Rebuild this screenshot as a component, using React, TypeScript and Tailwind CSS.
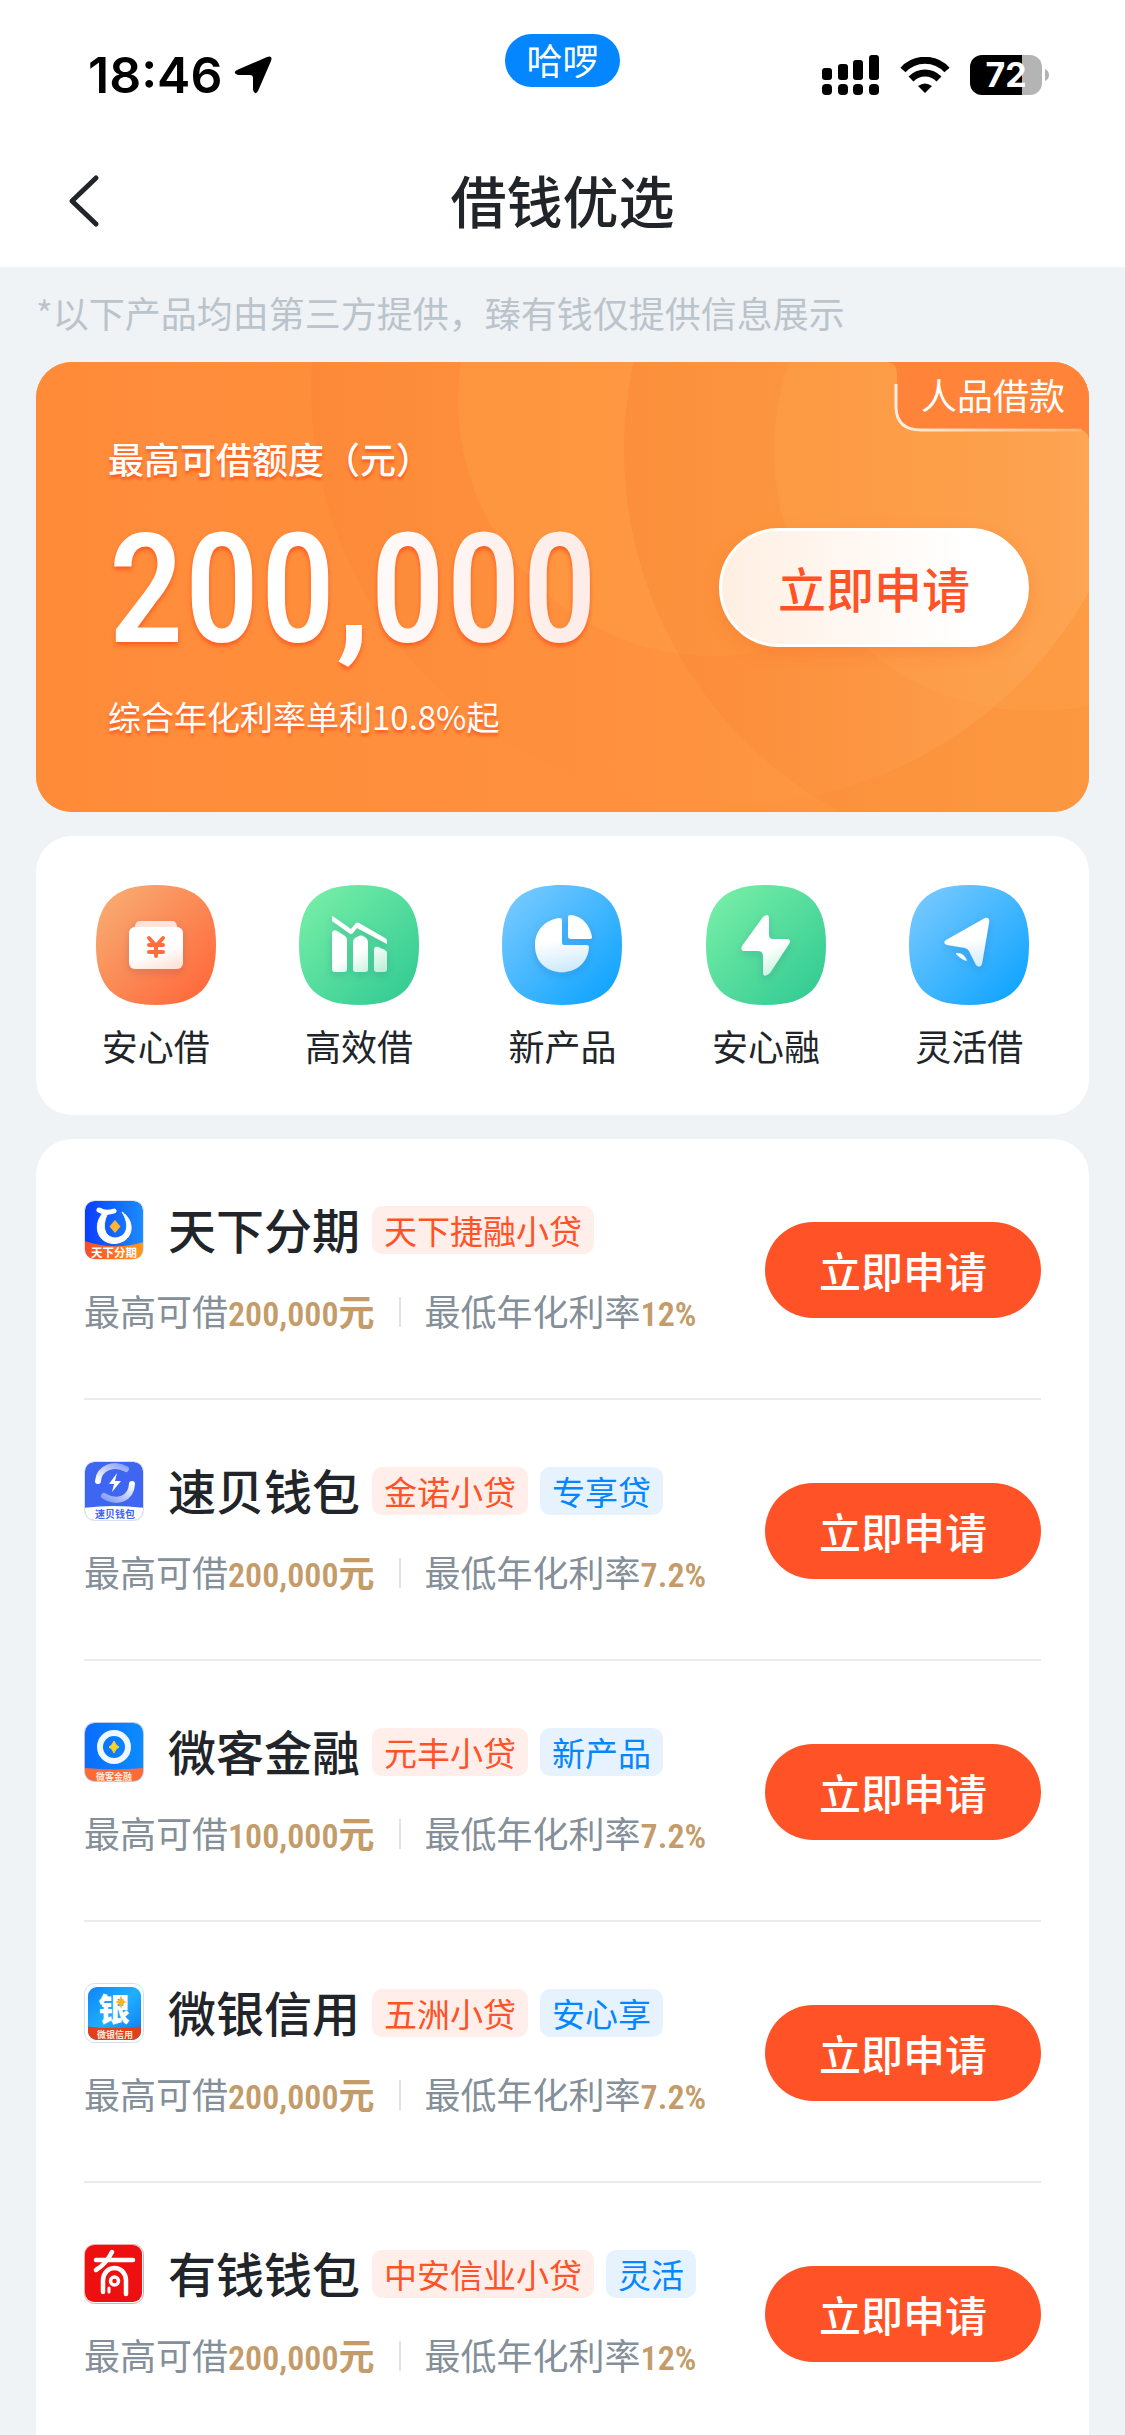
import React from 'react';

type Product = {
  name: string;
  lender: string;
  badge?: string;
  amount: string;
  rate: string;
  logo: React.ReactNode;
};

const LOGO_FONT = '"Noto Sans CJK SC", sans-serif';

/* ---------- Product logos ---------- */

const TianxiaLogo = () => (
  <svg viewBox="0 0 60 60" className="size-15" aria-hidden="true">
    <defs>
      <linearGradient id="txBlue" x1="0" y1="0" x2="1" y2="0">
        <stop offset="0" stopColor="#0a3cff" />
        <stop offset="1" stopColor="#1c8dff" />
      </linearGradient>
      <linearGradient id="txOrange" x1="0" y1="0" x2="1" y2="0">
        <stop offset="0" stopColor="#ff4a24" />
        <stop offset="1" stopColor="#ff9a1f" />
      </linearGradient>
      <clipPath id="txClip">
        <rect x="1" y="1" width="58" height="58" rx="9" />
      </clipPath>
    </defs>
    <g clipPath="url(#txClip)">
      <rect width="60" height="60" fill="url(#txBlue)" />
      <path d="M0 41Q30 51 60 42V60H0Z" fill="url(#txOrange)" />
    </g>
    <path d="M15 10Q22 14 30 11" fill="none" stroke="#fff" strokeWidth="5" strokeLinecap="round" />
    <path d="M19 13C9 24 12 43 30 43.500C49 43 53 22 38 12C46 24 44 37 31 38C19 37 18 24 24 13Z" fill="#fff" stroke="#fff" strokeWidth="1" />
    <path d="M31 20L36.500 26.500L31 33L25.500 26.500Z" fill="#ffb52e" />
    <text x="30" y="57" textAnchor="middle" fontSize="11.500" fontWeight="700" fill="#fff" fontFamily={LOGO_FONT}>天下分期</text>
    <rect x="0.500" y="0.500" width="59" height="59" rx="10" fill="none" stroke="#dfe5ee" />
  </svg>
);

const SubeiLogo = () => (
  <svg viewBox="0 0 60 60" className="size-15" aria-hidden="true">
    <defs>
      <clipPath id="sbClip">
        <rect x="1" y="1" width="58" height="58" rx="9" />
      </clipPath>
      <linearGradient id="sbArc" x1="0" y1="1" x2="1" y2="0">
        <stop offset="0" stopColor="#fff" />
        <stop offset="1" stopColor="#fff" stopOpacity="0.400" />
      </linearGradient>
      <linearGradient id="sbArc2" x1="1" y1="0" x2="0" y2="1">
        <stop offset="0" stopColor="#fff" />
        <stop offset="1" stopColor="#fff" stopOpacity="0.350" />
      </linearGradient>
    </defs>
    <g clipPath="url(#sbClip)">
      <rect width="60" height="60" fill="#3f66f0" />
      <path d="M0 47Q30 43 60 47V60H0Z" fill="#fff" />
    </g>
    <path d="M14 20C15 7 30 1 42 8" fill="none" stroke="url(#sbArc)" strokeWidth="6" strokeLinecap="round" />
    <path d="M48 23C47 38 33 43 20 35" fill="none" stroke="url(#sbArc2)" strokeWidth="6" strokeLinecap="round" />
    <path d="M33 12L25 23H30L28 31L37 20H31Z" fill="#fff" />
    <text x="31" y="57" textAnchor="middle" fontSize="10" fontWeight="700" fill="#3f66f0" fontFamily={LOGO_FONT}>速贝钱包</text>
    <rect x="0.500" y="0.500" width="59" height="59" rx="10" fill="none" stroke="#d9dfec" />
  </svg>
);

const WeikeLogo = () => (
  <svg viewBox="0 0 60 60" className="size-15" aria-hidden="true">
    <defs>
      <linearGradient id="wkBlue" x1="0" y1="0" x2="1" y2="0">
        <stop offset="0" stopColor="#0a6bff" />
        <stop offset="1" stopColor="#0b8dff" />
      </linearGradient>
      <clipPath id="wkClip">
        <rect x="1" y="1" width="58" height="58" rx="9" />
      </clipPath>
    </defs>
    <g clipPath="url(#wkClip)">
      <rect width="60" height="60" fill="url(#wkBlue)" />
      <path d="M0 46Q30 49 60 46V60H0Z" fill="#ff6a35" />
    </g>
    <circle cx="30" cy="25" r="14" fill="none" stroke="#eef6ff" strokeWidth="6" />
    <path d="M30 19Q31.500 23.500 35 25Q31.500 26.500 30 31Q28.500 26.500 25 25Q28.500 23.500 30 19Z" fill="#ffd321" stroke="#ffd321" />
    <text x="30" y="58" textAnchor="middle" fontSize="9" fontWeight="700" fill="#ffe9df" fontFamily={LOGO_FONT}>微客金融</text>
    <rect x="0.500" y="0.500" width="59" height="59" rx="10" fill="none" stroke="#bcc8e6" />
  </svg>
);

const WeiyinLogo = () => (
  <svg viewBox="0 0 60 60" className="size-15" aria-hidden="true">
    <defs>
      <linearGradient id="wyBlue" x1="0" y1="0" x2="1" y2="1">
        <stop offset="0" stopColor="#0c7cf5" />
        <stop offset="0.500" stopColor="#1fb0ff" />
        <stop offset="1" stopColor="#0a6ff0" />
      </linearGradient>
      <clipPath id="wyClip">
        <rect x="4" y="4" width="53" height="53" rx="9" />
      </clipPath>
    </defs>
    <rect x="0.500" y="0.500" width="59" height="59" rx="10" fill="#fff" stroke="#d5e0ee" />
    <g clipPath="url(#wyClip)">
      <rect width="60" height="60" fill="url(#wyBlue)" />
      <path d="M0 43Q30 47 60 43V60H0Z" fill="#e0401c" />
    </g>
    <text x="30" y="38" textAnchor="middle" fontSize="32" fontWeight="900" fill="#fff" fontFamily={LOGO_FONT}>银</text>
    <path d="M37 12Q38 18 43 19Q38 20 37 26Q36 20 31 19Q36 18 37 12Z" fill="#ffb320" />
    <text x="31" y="55" textAnchor="middle" fontSize="9" fontWeight="700" fill="#ffe9df" fontFamily={LOGO_FONT}>微银信用</text>
  </svg>
);

const YouqianLogo = () => (
  <svg viewBox="0 0 60 60" className="size-15" aria-hidden="true">
    <rect x="0.500" y="0.500" width="59" height="59" rx="10" fill="#fff" stroke="#e9a9a9" />
    <rect x="1" y="1" width="57" height="57" rx="9" fill="#ee1010" />
    <g fill="none" stroke="#fff" strokeWidth="4.500" strokeLinecap="round" strokeLinejoin="round">
      <path d="M12 16H49" />
      <path d="M28 8Q22 20 12 26" />
      <path d="M19 48V36C20 20 41 20 42 36V50" />
      <circle cx="30.500" cy="37" r="4" strokeWidth="3.500" />
      <path d="M25 44V48" strokeWidth="3" />
    </g>
  </svg>
);

const products: Product[] = [
  { name: '天下分期', lender: '天下捷融小贷', amount: '200,000', rate: '12%', logo: <TianxiaLogo /> },
  { name: '速贝钱包', lender: '金诺小贷', badge: '专享贷', amount: '200,000', rate: '7.2%', logo: <SubeiLogo /> },
  { name: '微客金融', lender: '元丰小贷', badge: '新产品', amount: '100,000', rate: '7.2%', logo: <WeikeLogo /> },
  { name: '微银信用', lender: '五洲小贷', badge: '安心享', amount: '200,000', rate: '7.2%', logo: <WeiyinLogo /> },
  { name: '有钱钱包', lender: '中安信业小贷', badge: '灵活', amount: '200,000', rate: '12%', logo: <YouqianLogo /> },
];

/* ---------- Category icons ---------- */

const SQUIRCLE = 'M60 0C103 0 120 19 120 60S103 120 60 120S0 101 0 60S17 0 60 0Z';

const IconDefs = () => (
  <svg className="absolute size-0" aria-hidden="true">
    <defs>
      <linearGradient id="orangeTile" x1="0" y1="0" x2="1" y2="1">
        <stop offset="0.100" stopColor="#f8a970" />
        <stop offset="0.900" stopColor="#ff6a3c" />
      </linearGradient>
      <linearGradient id="greenTile" x1="0" y1="0" x2="1" y2="1">
        <stop offset="0.100" stopColor="#74eda6" />
        <stop offset="0.900" stopColor="#35cc94" />
      </linearGradient>
      <linearGradient id="blueTile" x1="0" y1="0" x2="1" y2="1">
        <stop offset="0.100" stopColor="#74c8ff" />
        <stop offset="0.900" stopColor="#12a5ff" />
      </linearGradient>
      <linearGradient id="whiteOrange" x1="0.300" y1="0" x2="0.700" y2="1">
        <stop offset="0.600" stopColor="#fff" />
        <stop offset="1" stopColor="#ffe3d8" />
      </linearGradient>
      <linearGradient id="whiteGreen" gradientUnits="userSpaceOnUse" x1="50" y1="50" x2="72" y2="92">
        <stop offset="0.400" stopColor="#fff" />
        <stop offset="1" stopColor="#bdf0d8" />
      </linearGradient>
      <linearGradient id="whiteBlue" gradientUnits="userSpaceOnUse" x1="56" y1="40" x2="64" y2="88">
        <stop offset="0.300" stopColor="#fff" />
        <stop offset="1" stopColor="#cbe8fb" />
      </linearGradient>
      <filter id="glyphShadow" x="-30%" y="-30%" width="160%" height="160%">
        <feDropShadow dx="0" dy="3" stdDeviation="4" floodColor="#00306a" floodOpacity="0.140" />
      </filter>
    </defs>
  </svg>
);

const categories = [
  {
    label: '安心借',
    tile: 'url(#orangeTile)',
    glyph: (
      <>
        <path d="M38 44L40 38Q41 36 44 36H76Q79 36 80 38L82 44Z" fill="#ffe3da" />
        <rect x="33" y="42" width="54" height="42" rx="6" fill="url(#whiteOrange)" />
        <path d="M53 53L60 61L67 53M53 60H67M53 67H67M60 61V71" fill="none" stroke="#ff6c3f" strokeWidth="4" strokeLinecap="round" />
      </>
    ),
  },
  {
    label: '高效借',
    tile: 'url(#greenTile)',
    glyph: (
      <g fill="url(#whiteGreen)">
        <path d="M33 31L35 32L52 44L57 38Q58 37 60 38L86 53Q88 54 88 56V59L58 43L54 48Q52 50 50 48L33 36Z" fill="#fff" />
        <path d="M33 47Q35 44 38 46L46 51Q48 53 48 55V84Q48 87 45 87H36Q33 87 33 84Z" />
        <path d="M54 57Q54 55 56 53L60 51Q62 50 64 51L67 53Q69 55 69 57V84Q69 87 66 87H57Q54 87 54 84Z" />
        <path d="M75 64Q76 61 79 62L86 65Q88 66 88 68V84Q88 87 85 87H78Q75 87 75 84Z" />
      </g>
    ),
  },
  {
    label: '新产品',
    tile: 'url(#blueTile)',
    glyph: (
      <>
        <path d="M58 33Q60 33 60 35V58Q60 60 62 60H84Q87 60 87 62C85 96 33 96 33 60C33 44 45 34 58 33Z" fill="url(#whiteBlue)" />
        <path d="M66 32Q66 30 69 30C80 31 88 40 90 52Q90 54 88 54H69Q66 54 66 51Z" fill="#fff" />
      </>
    ),
  },
  {
    label: '安心融',
    tile: 'url(#greenTile)',
    glyph: (
      <path d="M57 32Q63 27 63 34V50Q63 54 67 54H80Q86 54 83 59L64 88Q57 94 57 87V71Q57 66 52 66H39Q34 66 36 61Z" fill="url(#whiteGreen)" />
    ),
  },
  {
    label: '灵活借',
    tile: 'url(#blueTile)',
    glyph: (
      <g fill="url(#whiteBlue)">
        <path d="M76 33Q81 32 80 38L73 79Q71 84 67 80L60 66Q59 64 56 63L38 60Q33 58 37 55Z" />
        <path d="M47 68Q55 67 58 76Q53 75 47 69Z" fill="#fff" />
      </g>
    ),
  },
];

/* ---------- Sections ---------- */

const StatusBar = () => (
  <div className="grid h-[134px] grid-cols-3 items-start px-[76px]">
    <div className="flex h-[150px] items-center gap-3 pl-3 text-black">
      <span className="font-[Inter] text-[50px] leading-none font-semibold">18:46</span>
      <svg viewBox="0 0 38 38" className="size-[38px]" aria-hidden="true">
        <path d="M33 1Q39 -1 37 5L24 35Q21 40 19 34V22Q19 19 16 19H4Q-2 17 3 14Z" fill="#000" />
      </svg>
    </div>

    <div className="mt-[34px] flex h-[53px] w-[115px] items-center justify-center justify-self-center rounded-full bg-[#0486ff] pb-1 text-4xl leading-none text-white">
      哈啰
    </div>

    <div className="flex h-[150px] items-center justify-end">
      <svg viewBox="0 0 58 40" className="mr-5 h-10 w-[58px]" aria-hidden="true">
        <rect x="0" y="13" width="10" height="12" rx="3" />
        <rect x="16" y="9" width="10" height="16" rx="3" />
        <rect x="31" y="5" width="10" height="20" rx="3" />
        <rect x="47" y="0" width="10" height="25" rx="3" />
        <rect x="0" y="29" width="10" height="11" rx="4" />
        <rect x="16" y="29" width="10" height="11" rx="4" />
        <rect x="31" y="29" width="10" height="11" rx="4" />
        <rect x="47" y="29" width="10" height="11" rx="4" />
      </svg>
      <svg viewBox="0 0 50 36" className="mr-5 h-9 w-[50px]" aria-hidden="true">
        <g fill="none" stroke="#000" strokeWidth="7">
          <path d="M3 13C15 0 35 0 47 13" />
          <path d="M11 22C19 14 31 14 39 22" />
        </g>
        <path d="M18 29Q25 24 32 29L25 36Z" fill="#000" />
      </svg>
      <div className="flex items-center gap-[3px]">
        <div className="flex h-10 w-[72px] items-center justify-center rounded-xl bg-linear-to-r from-black from-72% to-[#b4b4b4] to-72% font-[Inter] text-[34px] leading-10 font-bold text-white">
          72
        </div>
        <svg viewBox="0 0 4 12" className="h-3 w-1" aria-hidden="true">
          <path d="M0 0Q4 2 4 6T0 12Z" fill="#b4b4b4" />
        </svg>
      </div>
    </div>
  </div>
);

const NavBar = () => (
  <nav className="grid h-[133px] grid-cols-[1fr_auto_1fr] items-center px-[66px]">
    <button type="button" aria-label="返回" className="justify-self-start">
      <svg viewBox="0 0 36 54" className="h-[54px] w-9" aria-hidden="true">
        <path d="M30 4L6 27L30 50" fill="none" stroke="#212529" strokeWidth="5" strokeLinecap="round" strokeLinejoin="round" />
      </svg>
    </button>
    <h1 className="pb-1 text-[56px] leading-none font-medium text-[#212529]">借钱优选</h1>
  </nav>
);

const HeroBackground = () => (
  <svg viewBox="0 0 1053 450" preserveAspectRatio="xMaxYMin slice" className="absolute inset-0 size-full" aria-hidden="true">
    <defs>
      <linearGradient id="heroBase" x1="0" y1="0" x2="1" y2="0">
        <stop offset="0" stopColor="#ff8b39" />
        <stop offset="0.550" stopColor="#ff913e" />
        <stop offset="1" stopColor="#fb9840" />
      </linearGradient>
      <linearGradient id="ringOne" x1="0" y1="0" x2="1" y2="0">
        <stop offset="0" stopColor="#f47c2c" stopOpacity="0.250" />
        <stop offset="0.500" stopColor="#ff9a48" stopOpacity="0.100" />
        <stop offset="1" stopColor="#ffb870" stopOpacity="0.550" />
      </linearGradient>
      <linearGradient id="ringTwo" x1="0" y1="0" x2="1" y2="0">
        <stop offset="0" stopColor="#f47c2c" stopOpacity="0.300" />
        <stop offset="0.600" stopColor="#f98f3b" stopOpacity="0" />
      </linearGradient>
      <linearGradient id="cornerLine" gradientUnits="userSpaceOnUse" x1="860" y1="40" x2="1053" y2="40">
        <stop offset="0" stopColor="#fff" stopOpacity="0.850" />
        <stop offset="1" stopColor="#fff" stopOpacity="0.150" />
      </linearGradient>
    </defs>
    <rect width="1053" height="450" fill="url(#heroBase)" />
    <circle cx="690" cy="28" r="415" fill="url(#ringOne)" />
    <circle cx="678" cy="38" r="256" fill="#ffa548" fillOpacity="0.300" />
    <circle cx="999" cy="88" r="411" fill="url(#ringTwo)" />
    <circle cx="999" cy="88" r="261" fill="#ffa64e" fillOpacity="0.300" />
    <path d="M851 0Q861 1 861 12V46Q862 67 885 67H1041Q1051 67 1053 77V0Z" fill="#ff8338" />
    <path d="M860 22V46Q861 68 885 68H1046" fill="none" stroke="url(#cornerLine)" strokeWidth="3" />
  </svg>
);

const HeroCard = () => (
  <section className="relative overflow-hidden rounded-[36px] bg-[#ff8e3c] text-white">
    <HeroBackground />
    <p className="absolute top-3 right-6 text-4xl leading-10">人品借款</p>
    <div className="relative flex items-center justify-between pt-[72px] pr-[60px] pb-[72px] pl-[72px]">
      <div>
        <p className="text-4xl leading-12 font-medium [text-shadow:0_3px_3px_#ff5a1f]">最高可借额度（元）</p>
        <p className="mt-7 bg-linear-to-r from-white from-40% to-[#fdebe6] bg-clip-text font-['Roboto_Condensed','Liberation_Sans_Narrow',sans-serif] text-[152px] leading-[160px] font-medium text-transparent drop-shadow-[0_3px_2px_#ff5a1f]">
          200,000
        </p>
        <p className="mt-[22px] text-[33px] leading-12 [text-shadow:0_3px_3px_#ff5a1f]">综合年化利率单利10.8%起</p>
      </div>
      <button
        type="button"
        className="h-[119px] rounded-full border-3 border-white bg-linear-to-r from-[#ffefe2] to-white to-80% px-14 text-[48px] leading-none font-medium text-[#ff5226] shadow-[0_6px_15px_#f9702c66]"
      >
        立即申请
      </button>
    </div>
  </section>
);

const CategoryCard = () => (
  <section className="grid grid-cols-5 rounded-[36px] bg-white px-[18px] pt-[49px] pb-[43px]">
    <IconDefs />
    {categories.map(({ label, tile, glyph }) => (
      <a key={label} href="#" className="flex flex-col items-center gap-[13px]">
        <svg viewBox="0 0 120 120" className="size-30" aria-hidden="true">
          <path d={SQUIRCLE} fill={tile} />
          <g filter="url(#glyphShadow)">{glyph}</g>
        </svg>
        <span className="text-4xl leading-[54px] text-[#212529]">{label}</span>
      </a>
    ))}
  </section>
);

const ProductRow = ({ name, lender, badge, amount, rate, logo }: Product) => (
  <li className="flex h-[261px] items-center justify-between border-b-2 border-[#e9ebee] pt-0.5">
    <div className="flex flex-col gap-[26px] pb-0.5">
      <div className="flex h-15 items-center gap-3">
        {logo}
        <h2 className="ml-3 pb-1 text-[48px] leading-none font-medium text-[#212529]">{name}</h2>
        <span className="rounded-[10px] bg-[#ffeeea] px-3 text-[33px] leading-12 text-[#ff5226]">{lender}</span>
        {badge && (
          <span className="rounded-[10px] bg-[#e6f3ff] px-3 text-[33px] leading-12 text-[#0486ff]">{badge}</span>
        )}
      </div>
      <div className="flex items-center text-4xl leading-12 text-[#848f99]">
        <p className="flex items-baseline">
          最高可借
          <b className="flex items-baseline font-bold text-[#c49c6a]">
            <span className="font-['Roboto_Condensed','Liberation_Sans_Narrow',sans-serif] text-[34px] font-semibold">{amount}</span>元
          </b>
        </p>
        <span className="mx-6 h-[30px] w-0.5 bg-[#dde3ea]" />
        <p className="flex items-baseline">
          最低年化利率
          <b className="font-['Roboto_Condensed','Liberation_Sans_Narrow',sans-serif] text-[34px] font-semibold text-[#c49c6a]">{rate}</b>
        </p>
      </div>
    </div>
    <button type="button" className="h-24 rounded-full bg-[#ff5226] px-[54px] text-[42px] leading-none font-medium text-white">
      立即申请
    </button>
  </li>
);

const App = () => {
  return (
    <div className="flex h-screen flex-col bg-[#eff3f6] font-['Noto_Sans_CJK_SC',sans-serif]">
      <header className="shrink-0 bg-white">
        <StatusBar />
        <NavBar />
      </header>

      <main className="flex flex-1 flex-col gap-6 overflow-y-auto px-9 [scrollbar-width:none]">
        <div>
          <p className="pt-[18px] pb-[23px] text-4xl leading-[54px] text-[#bbc3cb]">
            *以下产品均由第三方提供，臻有钱仅提供信息展示
          </p>
          <HeroCard />
        </div>
        <CategoryCard />
        <ul className="rounded-t-[36px] bg-white px-12">
          {products.map((product) => (
            <ProductRow key={product.name} {...product} />
          ))}
        </ul>
      </main>
    </div>
  );
};

export default App;
